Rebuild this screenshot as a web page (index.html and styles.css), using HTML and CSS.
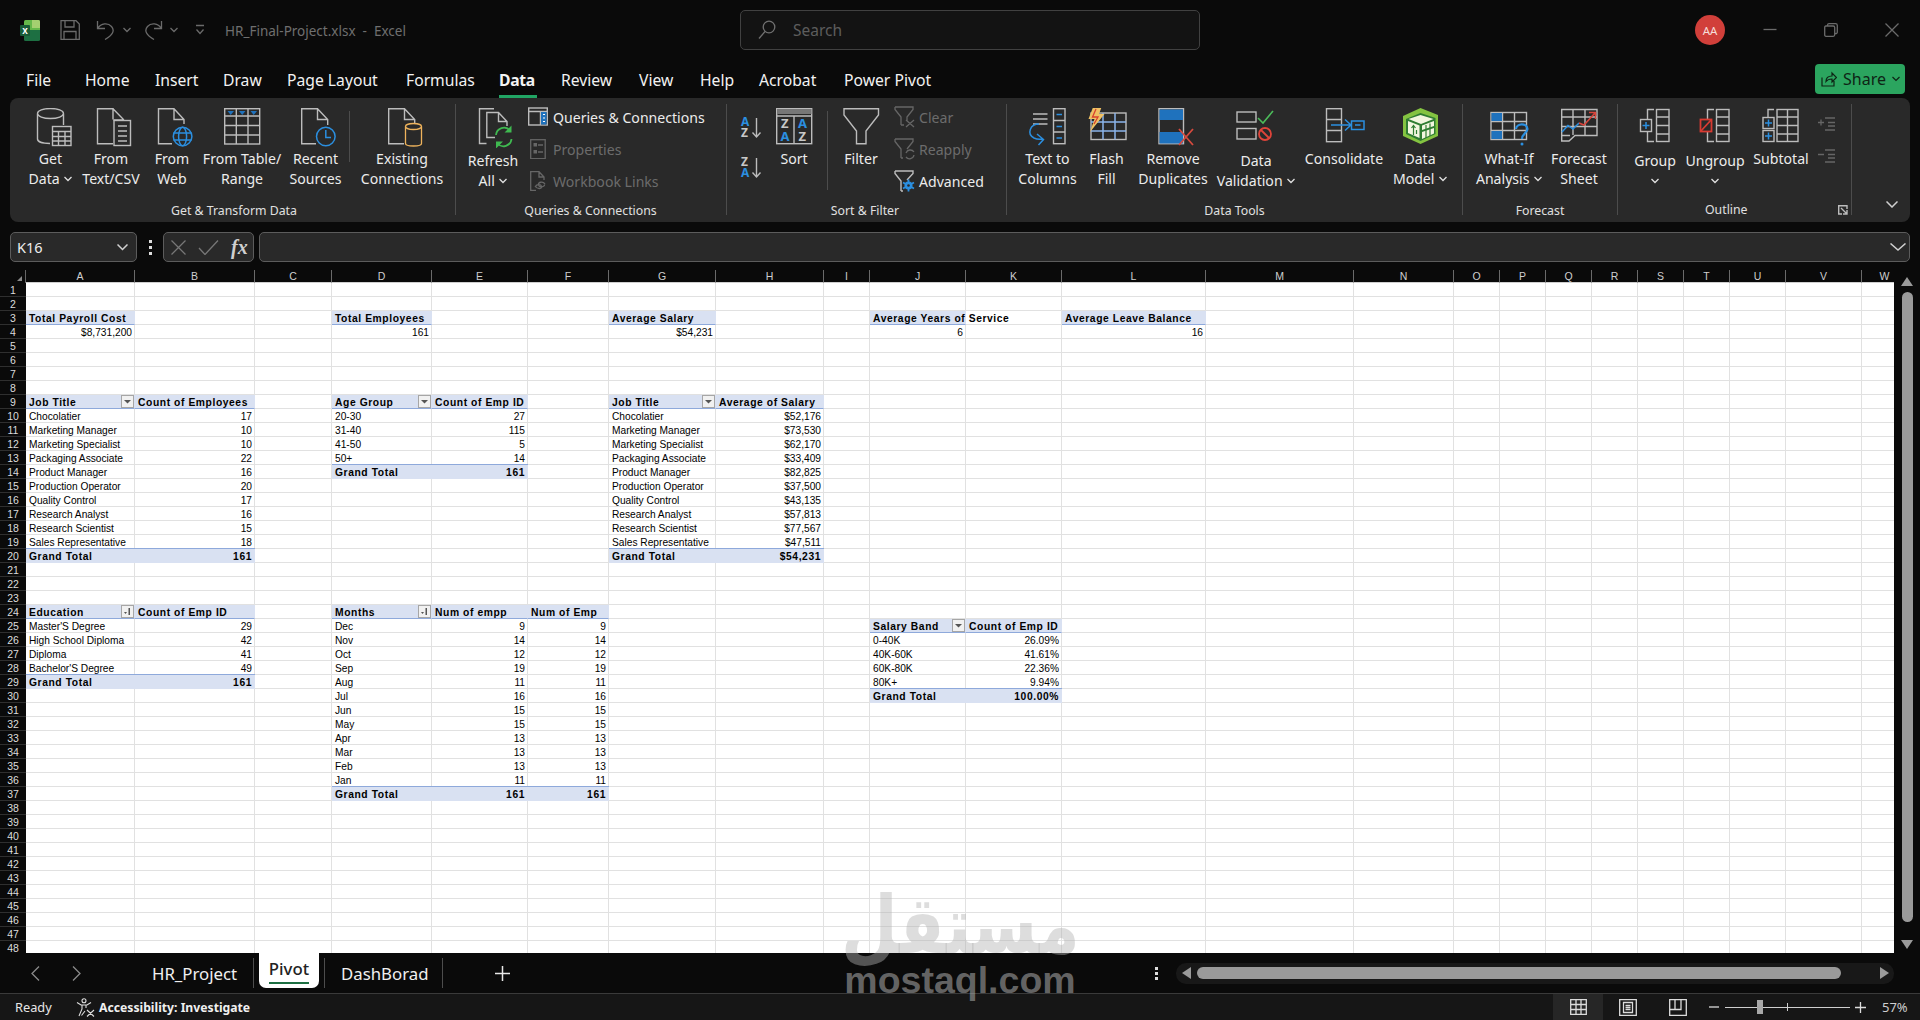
FILE: index.html
```html
<!DOCTYPE html>
<html lang="en">
<head>
<meta charset="utf-8">
<title>HR_Final-Project.xlsx - Excel</title>
<link rel="stylesheet" href="styles.css">
</head>
<body>
<div class="app">
  <header class="titlebar">
    <svg class="logo" width="20" height="21" viewBox="0 0 20 21"><path class="x-top" d="M4 1.5Q4 0 5.5 0H18.500Q20 0 20 1.500V10H4Z"/><path class="x-bot" d="M4 10H20V19.500Q20 21 18.500 21H5.500Q4 21 4 19.500Z"/><path class="x-light" d="M12 0H18.500Q20 0 20 1.500V8H12Z"/><rect class="x-box" x="0" y="5" width="10" height="11" rx="1"/><text class="x-x" x="5" y="13.500" text-anchor="middle">x</text></svg>
    <svg class="qat qat-save" width="20" height="20" viewBox="0 0 20 20"><path class="q" d="M1 .7H16L19.300 4V19.300H1ZM5 .7V7H14V.7M4 19.300V11.500H16V19.300"/></svg>
    <svg class="qat qat-undo" width="19" height="20" viewBox="0 0 19 20"><path class="q" d="M1.500 1V8.500H9M1.800 8.300C5 3 12 2.500 15.500 6.500C19 10.500 17 15 9 19.500"/></svg>
    <svg class="qat-chev" width="8" height="6" viewBox="0 0 8 6"><path class="q" d="M.5 1L4 4.500L7.500 1"/></svg>
    <svg class="qat qat-redo" width="19" height="20" viewBox="0 0 19 20"><path class="q" d="M17.500 1V8.500H10M17.200 8.300C14 3 7 2.500 3.500 6.500C0 10.500 2 15 10 19.500"/></svg>
    <svg class="qat-chev" width="8" height="6" viewBox="0 0 8 6"><path class="q" d="M.5 1L4 4.500L7.500 1"/></svg>
    <svg class="qat-more" width="10" height="12" viewBox="0 0 10 12"><path class="q" d="M1 1.500H9M1.500 5.500L5 9.500L8.500 5.500"/></svg>
    <span class="doc-title">HR_Final-Project.xlsx&nbsp; - &nbsp;Excel</span>
    <div class="search">
      <svg width="18" height="20" viewBox="0 0 18 20"><circle class="q2" cx="11" cy="7" r="5.800"/><path class="q2" d="M7 11.500L1 18.500"/></svg>
      <span>Search</span>
    </div>
    <div class="avatar">AA</div>
    <div class="winbtns">
      <svg width="14" height="14" viewBox="0 0 14 14"><path class="q" d="M.5 6.500H13.500"/></svg>
      <svg width="14" height="14" viewBox="0 0 14 14"><path class="q" d="M3.500 2.500V2A1.500 1.500 0 0 1 5 .7H11.500A1.800 1.800 0 0 1 13.300 2.500V9A1.500 1.500 0 0 1 11.500 10.500H11M1.800 3H9.200Q10.700 3 10.700 4.500V11.800Q10.700 13.300 9.200 13.300H2Q.7 13.300 .7 11.800V4.500Q.7 3 1.800 3Z"/></svg>
      <svg width="14" height="14" viewBox="0 0 14 14"><path class="q" d="M.5 .5L13.500 13.500M13.500 .5L.5 13.500"/></svg>
    </div>
  </header>

  <nav class="tabs">
    <span>File</span><span>Home</span><span>Insert</span><span>Draw</span><span>Page Layout</span><span>Formulas</span><span class="tab-on">Data</span><span>Review</span><span>View</span><span>Help</span><span>Acrobat</span><span>Power Pivot</span>
    <div class="share">
      <svg width="16" height="16" viewBox="0 0 16 16"><path class="sh" d="M1 6.500V15H13V10M5 10.500C5 6.500 8 5 11 5V2L15.500 6.500L11 11V8C8.500 8 6.500 8.500 5 10.500Z"/></svg>
      <span>Share</span>
      <svg width="8" height="6" viewBox="0 0 8 6"><path class="sh" d="M.5 1L4 4.500L7.500 1"/></svg>
    </div>
  </nav>

  <section class="ribbon">
    <!-- Get & Transform Data -->
    <div class="group g-get">
      <div class="gbody">
        <div class="rb b-get"><svg class="ic" width="44" height="40" viewBox="0 0 44 40"><ellipse class="s" cx="21.500" cy="5.500" rx="13" ry="5"/><path class="s" d="M8.500 6V31C8.500 33.500 13 35.500 21 35.500M34.500 6V17"/><rect class="s" x="23.500" y="18.500" width="18.500" height="19"/><path class="s" d="M23.500 23.500H42M23.500 28.500H42M23.500 33H42M29.500 23.500V37.500M36 23.500V37.500"/></svg><span class="lbl">Get<br>Data <svg class="chev" width="8" height="6" viewBox="0 0 8 6"><path d="M.5 1L4 4.500L7.500 1"/></svg></span></div>
        <div class="rb b-csv"><svg class="ic" width="44" height="40" viewBox="0 0 44 40"><path class="s" d="M24 11.500V.7H8.500V35.800H24M24 .7L34.500 11.500V12H24.500"/><rect class="s" x="25" y="12.500" width="16.500" height="25"/><path class="s" d="M29 18H38M29 23H38M29 28H38M29 33H38"/></svg><span class="lbl">From<br>Text/CSV</span></div>
        <div class="rb b-web"><svg class="ic" width="44" height="40" viewBox="0 0 44 40"><path class="s" d="M22 35.800H8.500V.7H24L34 11.500V16M24 .7V11.500H34"/><circle class="bl" cx="32.600" cy="28.500" r="9.300"/><ellipse class="bl" cx="32.600" cy="28.500" rx="4" ry="9.300"/><path class="bl" d="M23.500 25H41.500M23.500 32H41.500"/></svg><span class="lbl">From<br>Web</span></div>
        <div class="rb b-tbl"><svg class="ic" width="44" height="40" viewBox="0 0 44 40"><rect class="s" x="4.700" y=".7" width="35" height="35.300"/><path class="s" d="M4.700 8H39.700M4.700 17.500H39.700M4.700 27H39.700M16.300 .7V36M28 .7V36"/><path class="bf" d="M7.500 3H14L10.700 7ZM19 3H25.500L22.200 7ZM30.500 3H37L33.700 7Z"/></svg><span class="lbl">From Table/<br>Range</span></div>
        <div class="rb b-rec"><svg class="ic" width="44" height="40" viewBox="0 0 44 40"><path class="s" d="M22 35.800H7.700V.7H23.500L33.700 11.500V17M23.500 .7V11.500H33.700"/><circle class="bl" cx="31.800" cy="28.500" r="9.300"/><path class="bl" d="M31.800 22V29.500H37"/></svg><span class="lbl">Recent<br>Sources</span></div>
        <i class="minisep"></i>
        <div class="rb b-exi"><svg class="ic" width="44" height="40" viewBox="0 0 44 40"><path class="s" d="M24 35.800H8.700V.7H24.500L34.700 11.500V15M24.500 .7V11.500H34.700"/><ellipse class="y" cx="33.500" cy="18.500" rx="8" ry="3"/><path class="y" d="M25.500 18.500V35.500C25.500 37 29 38 33.500 38S41.500 37 41.500 35.500V18.500"/></svg><span class="lbl">Existing<br>Connections</span></div>
      </div>
      <div class="glabel">Get &amp; Transform Data</div>
    </div>
    <!-- Queries & Connections -->
    <div class="group g-qry">
      <div class="gbody">
        <div class="rb b-ref"><svg class="ic" width="44" height="40" viewBox="0 0 44 40"><path class="s" d="M15.500 .7H8.500V35.500H15.500M8.500 .7H23"/><path class="s" d="M24 29.500H15.800V4.500H27.500L36 13.500V18M27.500 4.500V13.500H36"/><path class="g" d="M25 27A8 8 0 0 1 39 22.500M40.500 31A8 8 0 0 1 26.500 35.500"/><path class="gf" d="M40.500 17.500V24.500H33.500ZM25 40.500V33.500H32Z"/></svg><span class="lbl lbl-low">Refresh<br>All <svg class="chev" width="8" height="6" viewBox="0 0 8 6"><path d="M.5 1L4 4.500L7.500 1"/></svg></span></div>
        <div class="smalls s-qry">
          <div class="sm"><svg width="20" height="20" viewBox="0 0 20 20"><rect class="s" x=".7" y="1" width="18.600" height="17"/><path class="s" d="M.7 4.500H19.300M12.500 4.500V18"/><rect class="bf" x="13" y="5" width="5.500" height="12.500"/><path class="w" d="M15 7.500H17M15 11H17M15 14.500H17"/></svg><span>Queries &amp; Connections</span></div>
          <div class="sm dim"><svg width="20" height="20" viewBox="0 0 20 20"><rect class="d" x="2.700" y=".7" width="14.500" height="19"/><path class="d" d="M10 6H15M10 13H15"/><rect class="df" x="5.500" y="4" width="3.500" height="3.500"/><rect class="df" x="5.500" y="11" width="3.500" height="3.500"/></svg><span>Properties</span></div>
          <div class="sm dim"><svg width="20" height="20" viewBox="0 0 20 20"><path class="d" d="M8 19.500H2.700V.7H11L16 6V9M11 .7V6H16M17 13C15 10 10 11 10.500 14S17 16 16.500 13.500M7 15C9 18.500 14 18 13.500 15.500S8 13 7.500 16"/></svg><span>Workbook Links</span></div>
        </div>
      </div>
      <div class="glabel">Queries &amp; Connections</div>
    </div>
    <!-- Sort & Filter -->
    <div class="group g-srt">
      <div class="gbody">
        <div class="sort-col">
          <svg width="24" height="30" viewBox="0 -5 24 30"><text class="az-b" x="1" y="9">A</text><text class="az-g" x="1" y="19.500">Z</text><path class="s" d="M16.500 1V19.500M12.500 15.500L16.500 20L20.500 15.500"/></svg>
          <svg width="24" height="30" viewBox="0 -5 24 30"><text class="az-g" x="1" y="9">Z</text><text class="az-b" x="1" y="19.500">A</text><path class="s" d="M16.500 1V19.500M12.500 15.500L16.500 20L20.500 15.500"/></svg>
        </div>
        <div class="rb b-srt"><svg class="ic" width="44" height="40" viewBox="0 0 44 40"><rect class="s" x="4.700" y=".7" width="35" height="35"/><rect class="df2" x="5" y="1" width="34.500" height="5"/><path class="s" d="M4.700 8H39.700M22 8V36"/><text class="az-g az-l" x="9" y="20">Z</text><text class="az-b az-l" x="8.500" y="33">A</text><text class="az-b az-l" x="26" y="20">A</text><text class="az-g az-l" x="26.500" y="33">Z</text></svg><span class="lbl">Sort</span></div>
        <i class="minisep minisep-t"></i>
        <div class="rb b-flt"><svg class="ic" width="44" height="40" viewBox="0 0 44 40"><path class="s" d="M5 .8H39.500V7L27 23V35.800H17.500V23L5 7Z"/></svg><span class="lbl">Filter</span></div>
        <div class="smalls s-flt">
          <div class="sm dim"><svg width="22" height="22" viewBox="0 0 22 22"><path class="d" d="M1 1H19V3.500L13 11V15M7 19V11L1 3.500V1M7 19H10M12 14L20 21M20 14L12 21"/></svg><span>Clear</span></div>
          <div class="sm dim"><svg width="22" height="22" viewBox="0 0 22 22"><path class="d" d="M1 1H19V3.500L13 11M7 20V11L1 3.500V1M7 20H9M12 15A4.500 4.500 0 0 1 20 14M20 17A4.500 4.500 0 0 1 12 19"/></svg><span>Reapply</span></div>
          <div class="sm"><svg width="22" height="22" viewBox="0 0 22 22"><path class="s" d="M1 1H19V3.500L13 10M7 21V11L1 3.500V1M7 21H9"/><circle class="bfc" cx="14.500" cy="15.500" r="4"/><path class="bl2" d="M14.500 9.500V21.500M9 12.500L20 18.500M20 12.500L9 18.500"/><circle class="hole" cx="14.500" cy="15.500" r="1.300"/></svg><span>Advanced</span></div>
        </div>
      </div>
      <div class="glabel">Sort &amp; Filter</div>
    </div>
    <!-- Data Tools -->
    <div class="group g-tls">
      <div class="gbody">
        <div class="rb b-ttc"><svg class="ic" width="44" height="40" viewBox="0 0 44 40"><rect class="s" x="27.500" y=".7" width="11.500" height="35"/><path class="s" d="M27.500 12.500H39M27.500 24H39"/><path class="bl" d="M30.500 6.500H36M30.500 18.500H36M30.500 30H36"/><path class="s" d="M7 6H21.500M7 11H21.500M7 16H21.500"/><path class="bl" d="M13 16C4 16 .5 26 8 30C11 31.500 14 31.500 17 31M11 26L17.500 31.500L12.500 37"/></svg><span class="lbl">Text to<br>Columns</span></div>
        <div class="rb b-ffl"><svg class="ic" width="44" height="40" viewBox="0 0 44 40"><rect class="s" x="6" y="5" width="35" height="26.500"/><path class="lb" d="M6 14H41M6 23H41M18 5V31.500M30 5V31.500"/><path class="yf" d="M8.500 -2H17L14 6H19.500L5 24L9.500 11H3.500Z"/><path class="rd" d="M11 1L7.500 9H13L9 16"/></svg><span class="lbl">Flash<br>Fill</span></div>
        <div class="rb b-rdp"><svg class="ic" width="44" height="40" viewBox="0 0 44 40"><rect class="s" x="8" y=".7" width="24.500" height="35"/><rect class="bf" x="8.500" y="1.500" width="23.500" height="10.500"/><rect class="bf" x="8.500" y="24" width="23.500" height="11.500"/><path class="rdx" d="M28 21L42 37M42 21L28 37"/></svg><span class="lbl">Remove<br>Duplicates</span></div>
        <div class="rb b-val"><svg class="ic" width="44" height="40" viewBox="0 0 44 40"><rect class="s" x="3" y="4" width="19" height="10"/><rect class="s" x="3" y="20.500" width="19" height="10.500"/><path class="gc" d="M24 10L29 15L39 3"/><circle class="rdx2" cx="31" cy="26" r="6"/><path class="rdx2" d="M27 22L35 30"/></svg><span class="lbl lbl-low">Data<br>Validation <svg class="chev" width="8" height="6" viewBox="0 0 8 6"><path d="M.5 1L4 4.500L7.500 1"/></svg></span></div>
        <div class="rb b-con"><svg class="ic" width="44" height="40" viewBox="0 0 44 40"><rect class="s" x="4.500" y=".7" width="15" height="33"/><path class="s" d="M4.500 11.500H19.500M4.500 22.500H19.500"/><path class="bl" d="M9 17H28M23 11.500L29 17L23 22.500"/><rect class="bl" x="29.500" y="13" width="12.500" height="8.500"/><path class="bl" d="M33 17H38.500"/></svg><span class="lbl">Consolidate</span></div>
        <div class="rb b-mdl"><svg class="ic" width="44" height="40" viewBox="0 0 44 40"><path class="grn" d="M22.500 0L40 7V28L22.500 36L5 28V8Z"/><path class="grn-d" d="M8 11L22.500 5L37.500 10V26L22.500 33L8 26Z"/><path class="grn-l" d="M22.500 7L35.500 11L23 16L10.500 11ZM24 17.500L36 13V18L24 22ZM24 24L36 20V25.500L24 31ZM10 13L21.500 17.500V30L10 25Z"/><path class="grn-a" d="M15.500 18V27M13.500 20L15.500 17.500L17.500 20M18.500 22V26M28 17V30M32 15.500V28"/></svg><span class="lbl">Data<br>Model <svg class="chev" width="8" height="6" viewBox="0 0 8 6"><path d="M.5 1L4 4.500L7.500 1"/></svg></span></div>
      </div>
      <div class="glabel">Data Tools</div>
    </div>
    <!-- Forecast -->
    <div class="group g-fct">
      <div class="gbody">
        <div class="rb b-wif"><svg class="ic" width="44" height="40" viewBox="0 0 44 40"><rect class="s" x="4" y="4.500" width="35.500" height="27"/><path class="s" d="M4 13.500H39.500M4 22.500H39.500M15.500 4.500V31.500M27.500 4.500V31.500"/><rect class="bf" x="4.500" y="5" width="10.500" height="8"/><rect class="bf" x="4.500" y="23" width="10.500" height="8"/><path class="bl3" d="M29 21C29.500 15 40 14.500 40.500 21C40.500 25 35 25.500 35 31"/><circle class="bfc" cx="35" cy="36" r="1.500"/></svg><span class="lbl">What-If<br>Analysis <svg class="chev" width="8" height="6" viewBox="0 0 8 6"><path d="M.5 1L4 4.500L7.500 1"/></svg></span></div>
        <div class="rb b-fst"><svg class="ic" width="44" height="40" viewBox="0 0 44 40"><path class="s" d="M18 27.500H40V1.500H4.700V33H12L18 27.500ZM4.700 9H40M4.700 18.500H40M16 1.500V27M28 1.500V27.500M4.700 27.500H13"/><path class="bl" d="M5 24L11 17.500L16 21L22 15"/><path class="rdl" d="M22 15L27 17L38 5M32 4.500H38.500V11"/></svg><span class="lbl">Forecast<br>Sheet</span></div>
      </div>
      <div class="glabel">Forecast</div>
    </div>
    <!-- Outline -->
    <div class="group g-out">
      <div class="gbody">
        <div class="rb b-grp"><svg class="ic" width="44" height="40" viewBox="0 0 44 40"><rect class="s" x="23.500" y="1.500" width="12.500" height="32"/><path class="s" d="M23.500 9H36M23.500 17.500H36M23.500 26H36M21 1.500H14.500V11M14.500 24V33.500H21"/><rect class="s" x="7.500" y="11.500" width="11" height="12"/><path class="bl" d="M9.500 17.500H16.500M13 14V21"/></svg><span class="lbl lbl-low">Group<br><svg class="chev chev-solo" width="8" height="6" viewBox="0 0 8 6"><path d="M.5 1L4 4.500L7.500 1"/></svg></span></div>
        <div class="rb b-ugp"><svg class="ic" width="44" height="40" viewBox="0 0 44 40"><rect class="s" x="23.500" y="1.500" width="12.500" height="32"/><path class="s" d="M23.500 9H36M23.500 17.500H36M23.500 26H36M21 1.500H14.500V11M14.500 24V33.500H21"/><rect class="rdb" x="7.500" y="11.500" width="11" height="12"/><path class="rdb" d="M7.500 23.500L18.500 11.500"/></svg><span class="lbl lbl-low">Ungroup<br><svg class="chev chev-solo" width="8" height="6" viewBox="0 0 8 6"><path d="M.5 1L4 4.500L7.500 1"/></svg></span></div>
        <div class="rb b-sub"><svg class="ic" width="44" height="40" viewBox="0 0 44 40"><rect class="s" x="18" y="1.500" width="21" height="32"/><path class="s" d="M18 9H39M18 17.500H39M18 26H39M28.500 1.500V33.500M15 1.500H9V9"/><rect class="s" x="4" y="9.500" width="11" height="11"/><rect class="s" x="4" y="22.500" width="11" height="11"/><path class="bl" d="M6 15H13M9.500 11.500V18.500M6 28H13M9.500 24.500V31.500"/></svg><span class="lbl">Subtotal</span></div>
        <div class="outline-sm">
          <svg width="20" height="16" viewBox="0 0 20 16"><path class="d" d="M1 6.500H7M4 3.500V9.500M8 2H18M11 6.500H18M11 10H18M8 14H18"/></svg>
          <svg width="20" height="16" viewBox="0 0 20 16"><path class="d" d="M1 6.500H7M8 2H18M11 6.500H18M11 10H18M8 14H18"/></svg>
        </div>
      </div>
      <div class="glabel glabel-out"><span>Outline</span><svg class="launch" width="10" height="10" viewBox="0 0 10 10"><path class="s" d="M9 4V.7H.7V9H4M3 3L9 9M9 5V9H5"/></svg></div>
    </div>
    <div class="collapse"><svg width="12" height="7" viewBox="0 0 12 7"><path class="w2" d="M.5 .5L6 6L11.500 .5"/></svg></div>
  </section>

  <div class="fbar">
    <div class="namebox"><span>K16</span><svg width="11" height="7" viewBox="0 0 11 7"><path class="w2" d="M.5 .5L5.500 5.500L10.500 .5"/></svg></div>
    <div class="fdots"><i></i><i></i><i></i></div>
    <div class="fxbox">
      <svg width="15" height="15" viewBox="0 0 15 15"><path class="fxi" d="M.5 .5L14.500 14.500M14.500 .5L.5 14.500"/></svg>
      <svg width="21" height="15" viewBox="0 0 21 15"><path class="fxi" d="M1 8L7 14.500L20 .5"/></svg>
      <span class="fx">fx</span>
    </div>
    <div class="finput"><svg width="16" height="8" viewBox="0 0 16 8"><path class="w2" d="M.5 .5L8 7L15.500 .5"/></svg></div>
  </div>

  <div class="workarea">
    <div class="sheet" id="sheet"></div>
    <div class="vscroll">
      <svg width="12" height="9" viewBox="0 0 12 9"><path class="ar" d="M6 0L12 9H0Z"/></svg>
      <div class="vthumb"></div>
      <svg width="12" height="9" viewBox="0 0 12 9"><path class="ar" d="M6 9L12 0H0Z"/></svg>
    </div>
  </div>

  <div class="sheetbar">
    <svg class="nav nav-l" width="9" height="15" viewBox="0 0 9 15"><path class="nv" d="M8 .5L1 7.500L8 14.500"/></svg>
    <svg class="nav nav-r" width="9" height="15" viewBox="0 0 9 15"><path class="nv" d="M1 .5L8 7.500L1 14.500"/></svg>
    <span class="stab stab-hr">HR_Project</span>
    <i class="tsep"></i>
    <span class="stab-on"><b>Pivot</b></span>
    <i class="tsep"></i>
    <span class="stab stab-db">DashBorad</span>
    <i class="tsep"></i>
    <svg class="plus" width="15" height="15" viewBox="0 0 15 15"><path class="wp" d="M7.500 0V15M0 7.500H15"/></svg>
    <div class="hdots"><i></i><i></i><i></i></div>
    <div class="hscroll">
      <svg width="9" height="12" viewBox="0 0 9 12"><path class="ar" d="M0 6L9 0V12Z"/></svg>
      <div class="hthumb"></div>
      <svg width="9" height="12" viewBox="0 0 9 12"><path class="ar" d="M9 6L0 0V12Z"/></svg>
    </div>
  </div>

  <footer class="status">
    <span class="ready">Ready</span>
    <svg class="acc" width="19" height="19" viewBox="0 0 19 19"><circle class="wa" cx="8" cy="2.800" r="2"/><path class="wa" d="M1 4.500L5 7H11L15 4.500M6 7V11L3 18M10 7V10M9 13L5.500 17.500M11 12L18 18.500M18 12L11 18.500"/></svg>
    <b class="acc-t">Accessibility: Investigate</b>
    <div class="views">
      <div class="view view-on"><svg width="17" height="16" viewBox="0 0 17 16"><path class="wv" d="M.7 .7H16.300V15.300H.7ZM6 .7V15.300M11 .7V15.300M.7 5.500H16.300M.7 10.500H16.300"/></svg></div>
      <div class="view"><svg width="18" height="17" viewBox="0 0 18 17"><path class="wv" d="M.7 .7H17.300V16.300H.7ZM4.500 3.500H13.500V13.500H4.500ZM6.500 6.500H11.500M6.500 8.500H11.500M6.500 10.500H11.500"/></svg></div>
      <div class="view"><svg width="18" height="17" viewBox="0 0 18 17"><path class="wv" d="M.7 .7H17.300V16.300H.7ZM6 .7V10.500H.7M6 10.500H12V.7"/></svg></div>
    </div>
    <div class="zoom">
      <svg width="10" height="2" viewBox="0 0 10 2"><path class="wv" d="M0 1H10"/></svg>
      <div class="slider"><i class="tick"></i><i class="handle"></i></div>
      <svg width="11" height="11" viewBox="0 0 11 11"><path class="wv" d="M0 5.500H11M5.500 0V11"/></svg>
      <span class="pct">57%</span>
    </div>
  </footer>
</div>

<div class="watermark" aria-label="mostaql.com">
  <div class="wm-ar" lang="ar" dir="rtl">مستقل</div>
  <div class="wm-en">mostaql.com</div>
</div>
<script src="sheet.js"></script>
</body>
</html>
```
FILE: styles.css
```css
*{box-sizing:border-box}
html,body{margin:0;padding:0;height:100%}
body{background:#0a0a0a;color:#e8e8e8;font-family:"Noto Sans",sans-serif;overflow:hidden;position:relative}
.app{width:1920px;height:1020px;display:flex;flex-direction:column}
svg{display:block;flex:none}

/* shared icon strokes */
.q{fill:none;stroke:#6b6b6b;stroke-width:1.3}
.q2{fill:none;stroke:#707070;stroke-width:1.3}
.s{fill:none;stroke:#bcbcbc;stroke-width:1.4}
.d{fill:none;stroke:#666;stroke-width:1.3}
.df{fill:#666}
.df2{fill:#777}
.w{fill:none;stroke:#fff;stroke-width:1}
.w2{fill:none;stroke:#d0d0d0;stroke-width:1.5}
.bl{fill:none;stroke:#2b8fe0;stroke-width:1.5}
.bl2{fill:none;stroke:#2b8fe0;stroke-width:1.8}
.bl3{fill:none;stroke:#2b8fe0;stroke-width:2.200}
.bf{fill:#1f72bd}
.bfc{fill:#2b8fe0}
.hole{fill:#292929}
.lb{fill:none;stroke:#8ab4ea;stroke-width:1.500}
.y{fill:none;stroke:#eeb35c;stroke-width:1.3}
.g{fill:none;stroke:#3fb950;stroke-width:1.800}
.gf{fill:#3fb950}
.gc{fill:none;stroke:#4cbb5a;stroke-width:1.600}
.yf{fill:#efc063}
.rd{fill:none;stroke:#d8412f;stroke-width:1.300}
.rdx{fill:none;stroke:#d64a3e;stroke-width:1.800}
.rdx2{fill:none;stroke:#e0443a;stroke-width:1.800}
.rdl{fill:none;stroke:#d8453c;stroke-width:1.500}
.rdb{fill:none;stroke:#d83b32;stroke-width:1.800}
.grn{fill:#84c341}
.grn-d{fill:#2f7d32}
.grn-l{fill:#f2f6df}
.grn-a{fill:none;stroke:#2f7d32;stroke-width:1.200}
.az-b,.az-g{font:700 12px "Noto Sans",sans-serif}
.az-l{font-size:13px}
.az-b{fill:#2b8fe0}
.az-g{fill:#c8c8c8}

/* title bar */
.titlebar{height:60px;display:flex;align-items:center;flex:none;padding-left:20px}
.x-top{fill:#65b84a}
.x-bot{fill:#1d6f42}
.x-light{fill:#a5d070}
.x-box{fill:#185c37}
.x-x{fill:#fff;font:700 10px "Liberation Sans",sans-serif}
.qat-save{margin-left:20px}
.qat-undo{margin-left:16px}
.qat-chev{margin-left:8px}
.qat-redo{margin-left:13px}
.qat-redo + .qat-chev{margin-left:7px}
.qat-more{margin-left:17px}
.doc-title{margin-left:20px;width:192px;font-size:13.500px;color:#6f6f6f;white-space:nowrap;margin-top:1px}
.search{margin-left:323px;width:460px;height:40px;background:#131313;border:1px solid #414141;border-radius:5px;display:flex;align-items:center;padding-left:17px;gap:17px;color:#5d5d5d;font-size:15.500px}
.avatar{margin-left:495px;width:30px;height:30px;border-radius:50%;background:#d13f3a;color:#f5dcd8;font-size:11.500px;display:flex;align-items:center;justify-content:center}
.winbtns{margin-left:38px;display:flex;gap:47px;align-items:center}

/* ribbon tabs */
.tabs{height:38px;flex:none;display:grid;grid-template-columns:59px 70px 68px 64px 119px 93px 62px 78px 61px 59px 85px 971px 90px;padding-left:26px;align-items:center;font-size:15.700px;color:#f2f2f2;white-space:nowrap}
.tabs>span{padding-top:2px}
.tab-on{font-weight:700;color:#f4f4f4;letter-spacing:-.3px;position:relative}
.tab-on::after{content:"";position:absolute;left:0;width:38px;bottom:-7px;height:3px;background:#21a564}
.share{grid-column:13;width:90px;height:30px;background:#2ba55f;border-radius:4px;display:flex;align-items:center;gap:6px;padding:0 6px;color:#0e2415;font-size:16px}
.sh{fill:none;stroke:#0e2415;stroke-width:1.200}

/* ribbon */
.ribbon{flex:none;height:124px;margin:0 10px;background:#292929;border-radius:8px;display:flex;position:relative}
.group{display:flex;flex-direction:column;border-right:1px solid #4c4c4c;margin:6px 0 7px;height:111px;flex:none}
.gbody{height:100px;display:flex;padding-top:4px;flex:none}
.glabel{height:11px;text-align:center;font-size:12.300px;line-height:13px;color:#e0e0e0;white-space:nowrap}
.g-get{width:446px;padding-left:11px}
.g-qry{width:271px;padding-left:5px}
.g-srt{width:280px;padding-left:12px}
.g-tls{width:456px;padding-left:9px}
.g-fct{width:155px;padding-left:3px}
.g-fct .glabel{margin-left:-3px}
.g-tls .glabel{margin-left:-9px}
.g-srt .glabel{margin-left:-12px;padding-right:3px}
.g-qry .glabel{margin-left:-5px;padding-right:1px}
.g-get .glabel{margin-left:-11px;padding-left:3px}
.g-out{width:234px;padding-left:0}
.rb{display:flex;flex-direction:column;align-items:center;flex:none;position:relative}
.ic{height:40px;margin-bottom:1px}
.lbl{font-size:14.100px;line-height:20px;color:#ececec;text-align:center;white-space:nowrap}
.lbl-low{margin-top:2px}
.chev{display:inline-block;vertical-align:2px;margin-left:1px}
.chev path{fill:none;stroke:#e0e0e0;stroke-width:1.300}
.chev-solo{margin:0}
.b-get{width:59px}
.b-csv{width:62px}
.b-web{width:60px}
.b-tbl{width:80px}
.b-rec{width:67px}
.b-exi{width:100px;margin-left:2px}
.minisep{width:1px;height:51px;background:#4c4c4c;margin-top:3px;flex:none}
.b-ref{width:64px}
.smalls{display:flex;flex-direction:column;gap:12px;margin-top:-1px;font-size:14.100px;white-space:nowrap}
.sm{display:flex;align-items:center;gap:5px;height:20px;color:#ececec}
.dim{color:#6c6c6c}
.s-qry{margin-left:3px}
.sort-col{width:30px;display:flex;flex-direction:column;gap:10px;padding-top:4px;padding-left:1px;flex:none}
.b-srt{width:50px}
.minisep-t{height:79px;margin-left:8px;margin-right:0}
.b-flt{width:66px}
.s-flt .sm{gap:3px}
.b-ttc{width:63px}
.b-ffl{width:55px}
.b-rdp{width:78px}
.b-val{width:88px}
.b-con{width:88px}
.b-mdl{width:64px}
.b-wif{width:86px}
.b-fst{width:54px}
.b-grp{width:60px;margin-left:7px}
.b-ugp{width:60px}
.b-sub{width:66px;margin-left:3px}
.outline-sm{display:flex;flex-direction:column;gap:16px;padding-top:8px;margin-left:3px}
.glabel-out{display:flex;align-items:center;padding-left:87px;gap:0}
.glabel-out span{width:36px;display:block}
.launch{margin-left:97px}
.collapse{position:absolute;right:12px;bottom:14px}

/* formula bar */
.fbar{flex:none;margin-top:10px;height:30px;display:flex;padding-left:10px}
.namebox{width:127px;height:30px;background:#292929;border:1px solid #5c5c5c;border-radius:5px;display:flex;align-items:center;justify-content:space-between;padding:0 8px 0 6px;font-size:14.500px;color:#eee}
.fdots{width:26px;display:flex;flex-direction:column;align-items:center;justify-content:center;gap:3px}
.fdots i,.hdots i{width:3px;height:3px;background:#ddd;display:block}
.fxbox{width:91px;height:30px;background:#292929;border:1px solid #5c5c5c;border-radius:5px;display:flex;align-items:center;padding-left:7px;gap:12px}
.fxi{fill:none;stroke:#777;stroke-width:1.300}
.fx{font:italic 700 20px "Liberation Serif",serif;color:#cfcfcf}
.finput{width:1651px;margin-left:5px;height:30px;background:#292929;border:1px solid #5c5c5c;border-radius:5px;display:flex;align-items:center;justify-content:flex-end;padding-right:3px}

/* sheet */
.workarea{flex:none;margin-top:8px;height:683px;display:flex}
.sheet{width:1894px;height:683px;overflow:hidden;display:grid;grid-template-columns:26px 109px 120px 77px 100px 96px 81px 107px 108px 46px 96px 96px 144px 148px 100px 46px 46px 46px 46px 46px 46px 56px 76px 46px;grid-template-rows:13px repeat(48,14px);font:10.200px/13px "Liberation Sans",sans-serif;color:#000;background:#fff}
.corner{background:#0a0a0a;border-right:1px solid #666;position:relative}
.corner::after{content:"";position:absolute;right:3px;bottom:2px;border-style:solid;border-width:0 0 5px 5px;border-color:transparent transparent #8a8a8a transparent}
.ch{background:#0a0a0a;color:#cfcfcf;text-align:center;border-right:1px solid #6a6a6a;border-bottom:1px solid #cfcfcf;font-size:10.500px;line-height:12px}
.rh{background:#0a0a0a;color:#dcdcdc;text-align:center;border-bottom:1px solid #2f2f2f;font-size:10.500px;line-height:13px;padding-top:1px}
.c{border-right:1px solid #e1e1e1;border-bottom:1px solid #e1e1e1;padding:1px 2px 0 3px;white-space:nowrap;min-width:0;position:relative}
.num{text-align:right}
.hd{background:#d9e1f2;font-weight:700;letter-spacing:.58px;font-size:10.300px;border-right-color:#d9e1f2;border-bottom-color:#8ea9db}
.tot{background:#d9e1f2;font-weight:700;letter-spacing:.58px;font-size:10.300px;border-right-color:#d9e1f2;border-bottom-color:#d9e1f2;box-shadow:0 -1px 0 #8ea9db;z-index:1}
.flt{display:flex;justify-content:space-between;align-items:flex-start;padding-right:0}
.fbtn{width:13px;height:13px;margin-top:-1px;background:#f1f1f1;border:1px solid #a6a6a6;display:flex;align-items:center;justify-content:center;flex:none}
.fbtn path{fill:#555}

/* vertical scrollbar */
.vscroll{width:26px;display:flex;flex-direction:column;align-items:center;justify-content:space-between;padding:7px 0 4px;background:#0a0a0a}
.ar{fill:#9a9a9a}
.vthumb{width:11px;flex:1;margin:6px 0 18px;background:#9a9a9a;border-radius:6px}

/* sheet tabs */
.sheetbar{flex:none;height:40px;display:flex;align-items:center;background:#0a0a0a;font-size:16.800px;color:#f0f0f0;position:relative}
.nav-l{margin-left:31px}
.nav-r{margin-left:32px}
.nv{fill:none;stroke:#8a8a8a;stroke-width:1.300}
.stab{white-space:nowrap}
.stab-hr{margin-left:71px;width:101px}
.stab-db{margin-left:16px;width:101px}
.stab-on{margin:0 5px;width:60px;height:35px;align-self:flex-start;background:#fff;border-radius:0 0 7px 7px;color:#222;display:flex;justify-content:center;padding-top:4px;font-size:16.800px;position:relative}
.stab-on b{font-weight:500}
.stab-on::after{content:"";position:absolute;left:10px;right:10px;bottom:4px;height:2px;background:#1d6f42}
.tsep{width:1px;height:30px;background:#4d4d4d;flex:none}
.plus{margin-left:52px}
.wp{fill:none;stroke:#e8e8e8;stroke-width:1.500}
.hdots{margin-left:645px;display:flex;flex-direction:column;gap:2px}
.hscroll{margin-left:18px;width:718px;height:21px;background:#181818;border-radius:10px;display:flex;align-items:center;padding:0 5px 0 6px}
.hthumb{width:644px;height:12px;margin:0 39px 0 6px;background:#9a9a9a;border-radius:6px}

/* status bar */
.status{flex:none;height:27px;background:#161616;border-top:1px solid #3a3a3a;display:flex;align-items:center;font-size:13px;color:#e6e6e6;padding-left:15px}
.ready{width:61px;font-size:12.800px}
.wa{fill:none;stroke:#ddd;stroke-width:1.100}
.acc-t{margin-left:4px;font-weight:700;font-size:12.200px;white-space:nowrap;color:#f0f0f0;width:1454px}
.views{display:flex;height:26px}
.view{width:50px;display:flex;align-items:center;justify-content:center}
.view-on{background:#262626}
.wv{fill:none;stroke:#dcdcdc;stroke-width:1.300}
.zoom{display:flex;align-items:center;margin-left:6px}
.slider{width:125px;height:14px;margin:0 5px 0 6px;position:relative;background:linear-gradient(#cfcfcf,#cfcfcf) 0 50%/100% 1px no-repeat}
.tick{position:absolute;left:62px;top:3px;width:1px;height:8px;background:#cfcfcf}
.handle{position:absolute;left:32px;top:0;width:6px;height:14px;background:#a8a8a8}
.pct{margin-left:16px;font-size:13px;color:#cfcfcf}

/* watermark */
.watermark{position:absolute;left:845px;top:886px;width:230px;pointer-events:none;display:flex;flex-direction:column;align-items:center}
.wm-ar{font:700 80px/80px "DejaVu Sans",sans-serif;color:rgba(178,178,178,.445);white-space:nowrap;transform:scaleX(.815)}
.wm-en{font:700 37.500px/40px "Liberation Sans",sans-serif;color:rgba(178,178,178,.55);white-space:nowrap;margin-top:-6px}
```
FILE: sheet.js
```js
// Builds the worksheet from its cell data.
const COLS = "ABCDEFGHIJKLMNOPQRSTUVW".split("");
const cells = {};
const put = (col, row, text, cls) => { cells[col + row] = { text, cls: cls || "" }; };

// single-value summary cards
[["A", "Total Payroll Cost", "$8,731,200"], ["D", "Total Employees", "161"], ["G", "Average Salary", "$54,231"],
 ["J", "Average Years of Service", "6"], ["L", "Average Leave Balance", "16"]].forEach(([c, h, v]) => {
  put(c, 3, h, "hd");
  put(c, 4, v, "num");
});

// pivot(top-left col list, header row, headers, rows, totals, filter glyph)
function pivot(cols, top, heads, rows, totals, glyph) {
  heads.forEach((h, i) => put(cols[i], top, h, i === 0 ? "hd flt" : "hd"));
  cells[cols[0] + top].filter = glyph;
  rows.forEach((r, y) => r.forEach((v, i) => put(cols[i], top + 1 + y, v, i === 0 ? "" : "num")));
  totals.forEach((v, i) => put(cols[i], top + 1 + rows.length, v, i === 0 ? "tot" : "tot num"));
}
const jobs = ["Chocolatier", "Marketing Manager", "Marketing Specialist", "Packaging Associate", "Product Manager",
  "Production Operator", "Quality Control", "Research Analyst", "Research Scientist", "Sales Representative"];
const zip = (a, b) => a.map((x, i) => [x].concat(b[i]));

pivot(["A", "B"], 9, ["Job Title", "Count of Employees"], zip(jobs, ["17", "10", "10", "22", "16", "20", "17", "16", "15", "18"]), ["Grand Total", "161"], "drop");
pivot(["D", "E"], 9, ["Age Group", "Count of Emp ID"], [["20-30", "27"], ["31-40", "115"], ["41-50", "5"], ["50+", "14"]], ["Grand Total", "161"], "drop");
pivot(["G", "H"], 9, ["Job Title", "Average of Salary"], zip(jobs, ["$52,176", "$73,530", "$62,170", "$33,409", "$82,825", "$37,500", "$43,135", "$57,813", "$77,567", "$47,511"]), ["Grand Total", "$54,231"], "drop");
pivot(["A", "B"], 24, ["Education", "Count of Emp ID"], [["Master'S Degree", "29"], ["High School Diploma", "42"], ["Diploma", "41"], ["Bachelor'S Degree", "49"]], ["Grand Total", "161"], "sort");
pivot(["D", "E", "F"], 24, ["Months", "Num of empp", "Num of Emp"],
  [["Dec", "9", "9"], ["Nov", "14", "14"], ["Oct", "12", "12"], ["Sep", "19", "19"], ["Aug", "11", "11"], ["Jul", "16", "16"], ["Jun", "15", "15"], ["May", "15", "15"], ["Apr", "13", "13"], ["Mar", "13", "13"], ["Feb", "13", "13"], ["Jan", "11", "11"]],
  ["Grand Total", "161", "161"], "sort");
pivot(["J", "K"], 25, ["Salary Band", "Count of Emp ID"], [["0-40K", "26.09%"], ["40K-60K", "41.61%"], ["60K-80K", "22.36%"], ["80K+", "9.94%"]], ["Grand Total", "100.00%"], "drop");

const GLYPH = {
  drop: '<svg width="9" height="9" viewBox="0 0 9 9"><path d="M1 3H8L4.500 6.500Z"/></svg>',
  sort: '<svg width="9" height="9" viewBox="0 0 9 9"><path d="M1 5H4L2.500 7ZM5.500 1H7V8H5.500Z"/></svg>'
};
const sheet = document.getElementById("sheet");
const el = (cls, text) => { const d = document.createElement("div"); d.className = cls; if (text) d.textContent = text; return d; };

sheet.appendChild(el("corner"));
COLS.forEach(c => sheet.appendChild(el("ch", c)));
for (let r = 1; r <= 48; r++) {
  sheet.appendChild(el("rh", String(r)));
  COLS.forEach(c => {
    const data = cells[c + r];
    const d = el(("c " + (data ? data.cls : "")).trim());
    if (data && data.filter) {
      const s = document.createElement("span");
      s.textContent = data.text;
      const b = el("fbtn");
      b.innerHTML = GLYPH[data.filter];
      d.append(s, b);
    } else if (data) {
      d.textContent = data.text;
    }
    sheet.appendChild(d);
  });
}
```
